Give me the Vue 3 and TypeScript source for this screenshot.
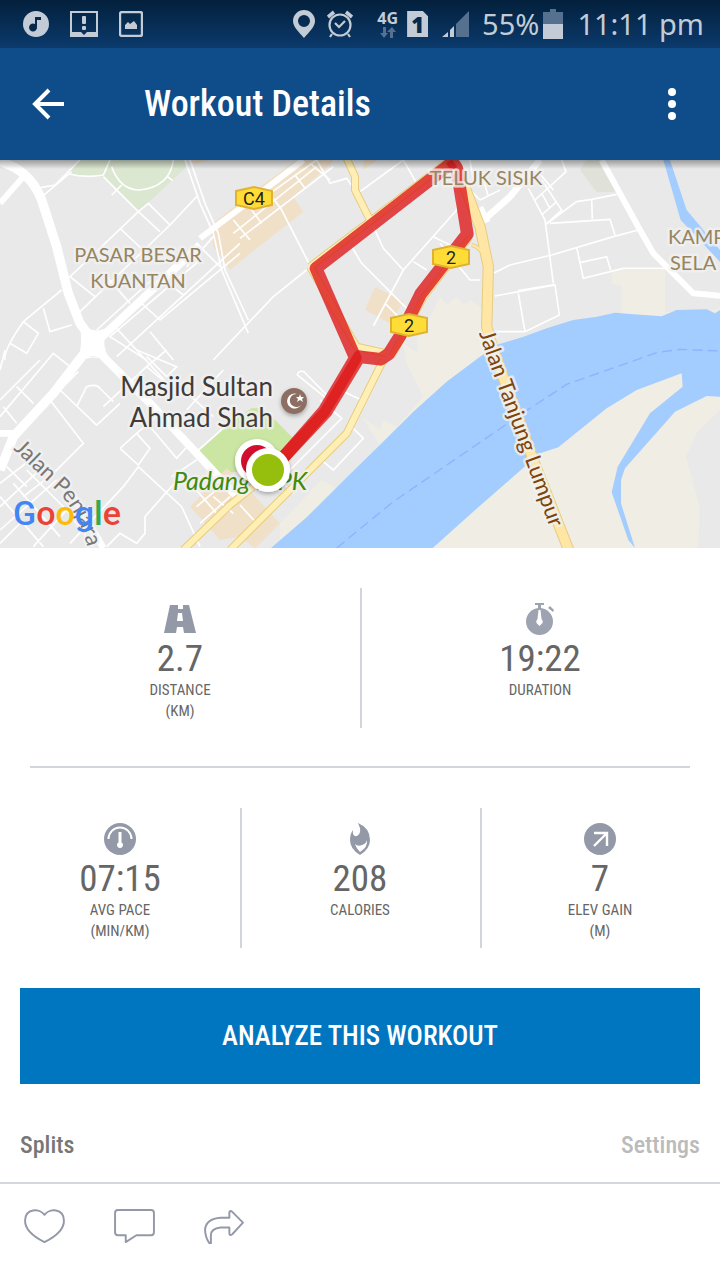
<script setup lang="ts">
interface Stat {
  icon: 'road' | 'watch' | 'gauge' | 'flame' | 'gain'
  value: string
  label: string
  unit?: string
}

const rows: Stat[][] = [
  [
    { icon: 'road', value: '2.7', label: 'DISTANCE', unit: '(KM)' },
    { icon: 'watch', value: '19:22', label: 'DURATION' },
  ],
  [
    { icon: 'gauge', value: '07:15', label: 'AVG PACE', unit: '(MIN/KM)' },
    { icon: 'flame', value: '208', label: 'CALORIES' },
    { icon: 'gain', value: '7', label: 'ELEV GAIN', unit: '(M)' },
  ],
]

const badges = [
  { x: 254, y: 198, text: 'C4' },
  { x: 451, y: 257, text: '2' },
  { x: 409, y: 325, text: '2' },
]
</script>

<template>
  <div class="screen">
    <div class="status">
      <div class="group left">
        <svg width="26" height="26" viewBox="0 0 26 26"><circle cx="13" cy="13" r="13" fill="#c3ccd6" /><path d="M12 6h6v3h-4v7a4 4 0 1 1-2-3z" fill="#08294e" /></svg>
        <svg width="28" height="26" viewBox="0 0 28 26"><path d="M1 1h26v24H1z" fill="none" stroke="#c3ccd6" stroke-width="2" /><path d="M1 21h10l3 3 3-3h10v4H1z" fill="#c3ccd6" /><rect x="12" y="5" width="4" height="8" rx="1" fill="#c3ccd6" /><rect x="12" y="15" width="4" height="4" rx="1" fill="#c3ccd6" /></svg>
        <svg width="24" height="26" viewBox="0 0 24 26"><rect x="1" y="1" width="22" height="24" rx="2" fill="none" stroke="#c3ccd6" stroke-width="2.4" /><path d="M6 18v-4l3-3 2 2 4-3 3 4v4z" fill="#c3ccd6" /></svg>
      </div>
      <div class="group right">
        <svg class="pin" width="22" height="28" viewBox="0 0 22 28"><path fill-rule="evenodd" d="M11 0a11 11 0 0 1 11 11c0 6-6 11-11 17C6 22 0 17 0 11A11 11 0 0 1 11 0zm0 5a6 6 0 1 0 0 12 6 6 0 0 0 0-12z" fill="#c3ccd6" /></svg>
        <svg class="alarm" width="26" height="28" viewBox="0 0 26 28" fill="none" stroke="#c3ccd6"><circle cx="13" cy="15" r="10.5" stroke-width="2.2" /><path d="M1 7l6-5M25 7l-6-5" stroke-width="3.6" /><path d="M8 13l4 4 6-6M5 24l-2 3M21 24l2 3" stroke-width="2.2" /></svg>
        <div class="net">
          <span>4G</span>
          <svg width="16" height="12" viewBox="0 0 16 12" fill="#56718f"><path d="M3 1h3v6h2l-4 5-4-5h3zM10 12h3V6h3l-4-5-5 5h3z" /></svg>
        </div>
        <span class="sim">1</span>
        <svg class="signal" width="28" height="26" viewBox="0 0 28 26"><path d="M14 13L27 0v26H14z" fill="#56718f" /><path d="M8 19l4-4v11H8zM0 26l6-5v5z" fill="#c3ccd6" /></svg>
        <span class="hand">55%</span>
        <svg class="battery" width="20" height="30" viewBox="0 0 20 30"><path d="M7 0h6v3h7v12H0V3h7z" fill="#56718f" /><path d="M0 15h20v15H0z" fill="#c3ccd6" /></svg>
        <time class="hand">11:11 pm</time>
      </div>
    </div>

    <header class="bar">
      <button class="icon-btn" type="button" aria-label="Back">
        <svg width="32" height="32" viewBox="0 0 32 32" fill="none" stroke="#fff" stroke-width="4"><path d="M32 16H4M17 2L3 16l14 14" /></svg>
      </button>
      <h1>Workout Details</h1>
      <button class="icon-btn" type="button" aria-label="More options">
        <svg width="32" height="32" viewBox="0 0 32 32" fill="#fff"><circle cx="16" cy="4" r="4" /><circle cx="16" cy="16" r="4" /><circle cx="16" cy="28" r="4" /></svg>
      </button>
    </header>

    <div class="map">
      <svg viewBox="0 160 720 388" preserveAspectRatio="xMidYMid slice" role="img" aria-label="Route map">
        <defs>
          <path id="jtl" d="M479 333L485 351L553 536" />
          <path id="jp" d="M13 449L58 492Q84 520 90 560" />
          <linearGradient id="fade" x1="0" y1="0" x2="0" y2="1"><stop offset="0" stop-color="#000" stop-opacity=".34" /><stop offset="1" stop-color="#000" stop-opacity="0" /></linearGradient>
          <filter id="soft" x="-40%" y="-40%" width="180%" height="180%"><feDropShadow dx="0" dy="2" stdDeviation="2" flood-opacity=".3" /></filter>
        </defs>
        <rect y="160" width="720" height="388" fill="#e9e9e9" />
        <g transform="translate(0 160) scale(.333333)">
          <!-- land use -->
          <path fill="#dbe7d1" d="M240 0L200 45 310 50 415 155 555 25 560 0z" />
          <path fill="#cbe6a3" d="M590 880L700 780 755 745 785 743 820 775 885 840 800 920 650 945z" />
          <path fill="#f0e0c8" d="M565 0h60l-35 12zM635 230L645 185 720 125 890 0h110l-10 15-110 95 30 45-190 150-30 25-50-70zM1090 0h40l-40 30zM1125 380l85 45-40 65-75-40zM570 1040l110-115 40 35 120 130-75 75-45-35-60 10z" />
          <path fill="#e0e2d9" d="M1740 30l20-30h45l45 95-60 2z" />
          <path fill="#efede4" d="M1320 410l20 25 30-25 20 25 20-15 30 20 50 115 150-50 140-35 85-12V375l-30-2v-43h160v125h100l55-7 30-20v40H1880L1500 600 1340 690 840 1164V1090l125-130 45 25 130-130-55-85 55 40 10-30 40 20 80-90-50-100-10-60 45 30-5-50 30-40z" />
          <path fill="#efede4" d="M1290 1170L1620 860 2000 620 2160 700V1170z" />
          <path fill="#e9e9e9" d="M2160 750l-70 70-32 70 42 155-5 119h65z" />
          <!-- water -->
          <path fill="#a3ccff" d="M1490 555L1570 530 1640 505 1720 480 1790 470 1845 458 1900 463 1985 469 2030 450 2120 448 2145 460 2160 450V710L2120 708 2025 755 1875 925 1863 960V1030L1905 1164 1885 1140 1835 997 1853 920 1950 760 2048 680 2045 640 1910 690 1820 745 1675 862 1620 880 1440 1037 1298 1164H813L920 1072 1030 962 1145 850 1240 755 1340 665 1440 590z" />
          <path fill="#a3ccff" d="M1990 0h20l50 150 100 120v35L2042 180z" />
          <path fill="none" stroke="#8fb2ff" stroke-width="4" stroke-dasharray="30 16" d="M1010 1164L1180 1025 1440 847 1560 765 1700 673 1970 578 2040 568 2160 573" />
          <!-- minor streets -->
          <g fill="none" stroke="#fff" stroke-width="5">
            <path d="M110 85l55-10L240 0M120 115L215 35M205 42Q260 55 310 45L330 0M310 50L415 155M335 20Q360 90 420 90 510 80 520 0M335 105l30-30M500 48l18 14M415 155l30-25 65 65 80-85M415 155l65 60M360 205l85 80M415 155L210 350l75 60M510 195L240 455M185 390L70 485Q10 570 15 600M70 485l45 35-35 60-50-30M130 445l20 70 65-20M600 300L330 530l110 70M720 250L350 590M425 430l55 50 240-200M550 405l-70-55M320 350l70 80M640 600l80-85M450 515l70 85M345 500l175 190M600 260l60 60M560 320l80-90M290 510L460 355" />
            <path d="M555 0l45 130 40 90 25 110 80 190M570 0l45 130 40 90 20 110 70 150" />
            <g transform="translate(720 0)">
              <path d="M100 115l25 35 87 170-112 90L0 515M335 260l30 50 135 135M400 200l30 65 60 65M400 498l90-168L650 150v-50M580 230l50 25M520 305l40 25M0 235L280 20M35 150l30 40M165 45l30 40M-20 220L230 20M30 240L-20 180M90 100L230 0l40 70 50-15 20 30M360 95L490 0l40 70M600 250l90 110h30M435 430l40 40M210 10l60 50M680 80l40 40M690 0l10 60" />
            </g>
            <g transform="translate(1440 0)">
              <path d="M145 85l50 95 25 190M40 340l50-25 125-30 185-55 75-20M195 195l95-70 45-7 75-15M335 118l2 60M210 190l180-12 15 47M290 262l20 93 120-30h130M300 308l80-18 12 40M45 408l180-33 13 90-103 50H45M115 400l20 115M115 392l110-18M245 0l13 35-93 85M185 100l25 45M185 60l60 90-50 45M185 165l45-40M0 120l60-30M5 40l20 70M170 30l50 60" />
            </g>
            <g transform="translate(0 570)">
              <path d="M0 200L160 10l50 40M0 150L120 30M15 0L0 60M10 170l40 50M50 110l50 50M150 150l100 130-90 90-90 70M180 120l110 105 70-65M180 120l55-55M230 170l30-60q30-10 40 5l40 40M310 170L440 50l60-50M360 295l50-45 40 45-35 50-55-50M415 350l130 120 55 120M415 350l-45 60L210 580M410 250l70-60M450 230l80 95 40-45M515 380l75-50M545 375L435 500v50l-25 30-50-30-40 40M590 305L720 190M560 180L670 60M640 200L540 110M410 0l120 50-30 30-60-60M440 50l60 50M0 400l90-70M0 470l130-120M0 540l170-150M80 360l120 120M40 400l140 160M0 440l130 150M100 590l100-110M20 350l60 60M0 580l60-60M200 480l80 110M580 410l70 80M590 470l70-60M600 520l90-80M640 440l60 50" />
            </g>
            <g transform="translate(720 570)">
              <path d="M290 170L172 75q2-15 20-10l68 70M300 120l65 30M240 150l65 55-155 155M340 235l30 30-90 95-30-25M0 465l50 55M120 390l40 40" />
            </g>
          </g>
          <!-- main streets -->
          <g fill="none" stroke="#fff" stroke-linejoin="round">
            <path stroke-width="28" d="M0 5Q90 30 125 120L170 260 205 400 240 490 280 545 160 700 40 830 0 930" />
            <path stroke-width="18" d="M70 50L0 130M600 235L720 145 910 0M1805 0l115 210 40 70 120 120 80 7" />
            <path stroke-width="24" d="M280 555L440 405 600 255M280 560l90 90 80 80 140 150 130 140" />
            <path stroke-width="20" d="M1620 0L1530 110 1440 190M0 820h60M220 1010l90 154" />
            <path stroke-width="50" d="M1440 170l20-10" />
          </g>
          <path fill="#fff" d="M236 480Q275 530 325 500 305 540 318 575L340 615Q280 570 225 615 255 560 236 480z" />
          <path fill="#e9e9e9" d="M246 597q35-15 68 0l-34-10z" />
          <!-- yellow roads -->
          <g fill="none" stroke-linejoin="round">
            <g stroke="#e6cc80" stroke-width="24">
              <path d="M1040-5l25 55v40l50 100M930 320L1345 5M930 320L1070 560l90 20M1150 600l-50 100-60 120-120 120L690 1170M550 1170L690 1035 860 900" />
              <path stroke-width="34" d="M1375 30l65 170 25 120-5 180 20 70 120 330 106 270" />
              <path stroke-width="12" d="M1415 255q40 10 50 70" />
              <path stroke-width="20" d="M1410 232L1272 412 1175 590" />
            </g>
            <g stroke="#ffefb5" stroke-width="18">
              <path d="M1040-5l25 55v40l50 100M930 320L1345 5M930 320L1070 560l90 20M1150 600l-50 100-60 120-120 120L690 1170M550 1170L690 1035 860 900" />
              <path stroke="#ffe6a4" stroke-width="28" d="M1375 30l65 170 25 120-5 180 20 70 120 330 106 270" />
              <path stroke="#ffe6a4" stroke-width="8" d="M1415 255q40 10 50 70" />
              <path stroke="#ffe6a4" stroke-width="16" d="M1410 232L1272 412 1175 590" />
            </g>
          </g>
          <!-- recorded route -->
          <g fill="none" stroke="#dd1a1a" stroke-width="38" stroke-linejoin="round">
            <path opacity=".8" d="M850 892L972 753 1066 594 948 325 1360 5" />
            <path opacity=".8" d="M1354 0L1370 24 1402 222 1262 402 1200 528 1166 582 1142 598 1078 590 978 756 850 892" />
          </g>
        </g>

        <g class="label tan">
          <text x="138" y="262">PASAR BESAR</text>
          <text x="138" y="288">KUANTAN</text>
          <text x="486" y="185">TELUK SISIK</text>
          <text class="start" x="668" y="244">KAMP</text>
          <text class="start" x="670" y="270">SELA</text>
        </g>
        <g class="label poi">
          <text x="273" y="396">Masjid Sultan</text>
          <text x="273" y="427">Ahmad Shah</text>
        </g>
        <text class="label park" x="173" y="490">Padang MPK</text>
        <text class="label road"><textPath href="#jtl">Jalan Tanjung Lumpur</textPath></text>
        <text class="label street"><textPath href="#jp">Jalan Penjara</textPath></text>

        <g v-for="b in badges" :key="b.y" :transform="`translate(${b.x} ${b.y})`">
          <path d="M-18-7L0-11 18-7V7L0 11-18 7z" fill="#ffdd36" stroke="#e0b230" stroke-width="2" />
          <text class="badge" y="7">{{ b.text }}</text>
        </g>

        <circle cx="294" cy="401" r="13" fill="#8d6e63" filter="url(#soft)" />
        <path d="M297 394a7.500 7.500 0 1 0 4 11 6.500 6.500 0 1 1-4-11z" fill="#fff" />
        <path d="M300 394l1 3 3 0-2 2 1 3-3-2-3 2 1-3-2-2 3 0z" fill="#fff" />

        <g filter="url(#soft)"><circle cx="257" cy="461" r="22" fill="#fff" /><circle cx="257" cy="461" r="16" fill="#d5102f" /></g>
        <g filter="url(#soft)"><circle cx="268" cy="470" r="22" fill="#fff" /><circle cx="268" cy="470" r="16" fill="#96bf0f" /></g>

        <text class="google" x="13" y="525"><tspan fill="#4285f4">G</tspan><tspan fill="#ea4335">o</tspan><tspan fill="#fbbc05">o</tspan><tspan fill="#4285f4">g</tspan><tspan fill="#34a853">l</tspan><tspan fill="#ea4335">e</tspan></text>
        <rect y="160" width="720" height="9" fill="url(#fade)" />
      </svg>
    </div>

    <main>
      <template v-for="(row, i) in rows" :key="i">
        <hr v-if="i > 0" />
        <section class="stats">
          <div v-for="s in row" :key="s.label" class="stat">
            <svg v-if="s.icon === 'road'" width="32" height="32" viewBox="0 0 32 32" fill="#9499a8"><path fill-rule="evenodd" d="M6 2h8v4h5V2h6l7 28H20l-1-6h-6l-1 6H0zM14 10l-1 8h6l-1-8z" /></svg>
            <svg v-else-if="s.icon === 'watch'" width="32" height="32" viewBox="0 0 32 32" fill="#9ea3b1"><circle cx="15.500" cy="18.500" r="13.500" /><path d="M11 0h9v2h-3v4h-3V2h-3zM24 5l2-2 4 4-1 2z" /><path d="M14.500 7h2l1 9q2 2 1 4l-3 3-3-3q-1-2 1-4z" fill="#fff" /></svg>
            <svg v-else-if="s.icon === 'gauge'" width="32" height="32" viewBox="0 0 32 32"><circle cx="16" cy="16" r="16" fill="#9499a8" /><path d="M4.500 16a11.500 11.500 0 0 1 23 0" fill="none" stroke="#fff" stroke-width="2" /><path d="M14.500 9h3v10.500a3 3 0 1 1-3 0z" fill="#fff" /></svg>
            <svg v-else-if="s.icon === 'flame'" width="32" height="32" viewBox="0 0 32 32"><path d="M14 0Q26 5 26 17q0 9-10 15Q6 26 6 17 6 11 9 7q-1 7 4 6 6-3 1-13z" fill="#9499a8" /><path d="M11 21q3 3 7 1 4-1 5-5 1 7-7 12-4-4-5-8z" fill="#fff" /></svg>
            <svg v-else width="32" height="32" viewBox="0 0 32 32"><circle cx="16" cy="16" r="16" fill="#9499a8" /><path d="M10 10h13v13M23 10L10 23" fill="none" stroke="#fff" stroke-width="2.400" /></svg>
            <strong>{{ s.value }}</strong>
            <span>{{ s.label }}</span>
            <span v-if="s.unit">{{ s.unit }}</span>
          </div>
        </section>
      </template>

      <button class="analyze" type="button">ANALYZE THIS WORKOUT</button>

      <div class="splits">
        <h2>Splits</h2>
        <a href="#settings">Settings</a>
      </div>
    </main>

    <footer>
      <button type="button" aria-label="Like">
        <svg width="41" height="35" viewBox="0 0 42 36"><path d="M21 6C26-1 41-1 41 12c0 10-10 17-20 22C11 29 1 22 1 12 1-1 16-1 21 6z" /></svg>
      </button>
      <button type="button" aria-label="Comment">
        <svg width="41" height="35" viewBox="0 0 42 36"><path d="M4 1h34q3 0 3 3v20q0 3-3 3H23l-11 7v-7H4q-3 0-3-3V4q0-3 3-3z" /></svg>
      </button>
      <button type="button" aria-label="Share">
        <svg width="41" height="35" viewBox="0 0 42 36"><path d="M26 9V3q1-2 3 0l11 11-11 12q-3 2-3-1v-6H17q-10 1-10 8v9H6Q1 29 1 21 2 10 17 9z" /></svg>
      </button>
    </footer>
  </div>
</template>

<style>
body {
  margin: 0;
  background: #fff;
}
</style>

<style scoped>
.screen {
  display: flex;
  flex-direction: column;
  min-height: 100vh;
  background: #fff;
  color: #666;
  font-family: "Liberation Sans Narrow", "Roboto Condensed", Roboto, sans-serif;
}
svg {
  display: block;
  flex: none;
}
button {
  border: 0;
  padding: 0;
  background: none;
  font-family: inherit;
  cursor: pointer;
}
.status {
  display: flex;
  align-items: center;
  justify-content: space-between;
  height: 48px;
  padding: 0 16px 0 23px;
  background: linear-gradient(#03203c, #0b3a6c);
  color: #c3ccd6;
}
.group {
  display: flex;
  align-items: center;
}
.left {
  gap: 21px;
}
.pin {
  margin-right: 12px;
}
.alarm {
  margin-right: 24px;
}
.net {
  display: flex;
  flex-direction: column;
  align-items: center;
  margin-right: 9px;
  font: 700 16px/16px "Open Sans", sans-serif;
}
.sim {
  width: 21px;
  height: 26px;
  margin-right: 14px;
  background: #c3ccd6;
  clip-path: polygon(0 0, 75% 0, 100% 20%, 100% 100%, 0 100%);
  color: #08294e;
  font: 800 22px/26px "Open Sans", sans-serif;
  text-align: center;
}
.signal {
  margin-right: 12px;
}
.hand {
  font: 400 29px/36px "Noto Sans", sans-serif;
  white-space: nowrap;
}
.battery {
  margin: 0 14px 0 4px;
}
.bar {
  display: flex;
  align-items: center;
  height: 112px;
  padding: 0 32px;
  background: #0f4c8a;
  color: #fff;
}
h1 {
  flex: 1;
  margin: 0 0 0 80px;
  font-size: 36px;
  line-height: 48px;
  font-weight: 500;
}
.map svg {
  width: 100%;
  height: auto;
}
.label {
  font-family: Lato, "Noto Sans", sans-serif;
  stroke: #f1f1f1;
  stroke-width: 5px;
  stroke-opacity: 0.8;
  stroke-linejoin: round;
  paint-order: stroke;
}
.tan {
  fill: #968560;
  font-size: 20px;
  text-anchor: middle;
}
.start {
  text-anchor: start;
}
.poi {
  fill: #403b38;
  font-size: 26px;
  text-anchor: end;
}
.park {
  fill: #418a0c;
  font-size: 25px;
  font-style: italic;
}
.road,
.street {
  fill: #7c430d;
  font-size: 22px;
}
.street {
  fill: #777;
}
.badge {
  fill: #222;
  font: 400 18px Roboto, sans-serif;
  text-anchor: middle;
}
.google {
  font: 500 34px Roboto, sans-serif;
}
hr {
  height: 2px;
  margin: -2px 30px 0;
  border: 0;
  background: #d3d5dd;
}
.stats {
  display: grid;
  grid-auto-columns: 1fr;
  grid-auto-flow: column;
  padding: 40px 0;
}
.stat {
  display: flex;
  flex-direction: column;
  align-items: center;
  min-height: 125px;
  padding-top: 15px;
  font-size: 15px;
  line-height: 21px;
}
.stat + .stat {
  box-shadow: inset 2px 0 #d3d5dd;
}
.stat strong {
  padding-top: 2px;
  font-size: 37px;
  line-height: 43px;
  font-weight: 400;
}
.analyze {
  display: block;
  width: calc(100% - 40px);
  height: 96px;
  margin: 0 20px;
  background: #0076c0;
  color: #fff;
  font-size: 27px;
  font-weight: 500;
}
.splits {
  display: flex;
  align-items: center;
  justify-content: space-between;
  height: 98px;
  padding: 24px 20px 0;
  box-sizing: border-box;
}
h2,
.splits a {
  margin: 0;
  color: #777;
  font-size: 24px;
  line-height: 32px;
  font-weight: 500;
  text-decoration: none;
}
.splits a {
  color: #bbb;
}
footer {
  display: flex;
  flex: 1;
  align-items: center;
  gap: 49px;
  padding: 0 24px 12px;
  border-top: 2px solid #d3d7dc;
}
footer path {
  fill: none;
  stroke: #9499a8;
  stroke-width: 2px;
  stroke-linejoin: round;
}
</style>
